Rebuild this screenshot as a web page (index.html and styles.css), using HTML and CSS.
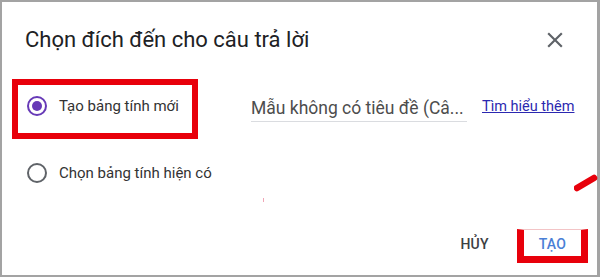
FILE: index.html
```html
<!DOCTYPE html>
<html lang="vi">
<head>
<meta charset="utf-8">
<link rel="stylesheet" href="styles.css">
</head>
<body>
<div class="frame">
  <div class="header">
    <div class="title">Chọn đích đến cho câu trả lời</div>
    <svg class="close" viewBox="0 0 24 24" width="26" height="26"><path d="M19 6.41L17.59 5 12 10.59 6.41 5 5 6.41 10.59 12 5 17.59 6.41 19 12 13.41 17.59 19 19 17.59 13.41 12z" fill="#5f6368"/></svg>
  </div>
  <div class="options">
    <div class="row">
      <span class="radio checked"><span class="dot"></span></span>
      <span class="label first">Tạo bảng tính mới</span>
      <span class="input">Mẫu không có tiêu đề (Câ...</span>
      <a class="link">Tìm hiểu thêm</a>
    </div>
    <div class="row second">
      <span class="radio"></span>
      <span class="label">Chọn bảng tính hiện có</span>
    </div>
  </div>
  <div class="footer">
    <span class="btn cancel">HỦY</span>
    <span class="btn create">TẠO</span>
  </div>
  <div class="mark box1"></div>
  <div class="mark box2"></div>
  <svg class="mark stroke" width="30" height="20" viewBox="0 0 30 20"><line x1="3" y1="16" x2="20" y2="6" stroke="#e8000b" stroke-width="6.5" stroke-linecap="round"/></svg>
  <div class="mark speck"></div>
</div>
</body>
</html>
```
FILE: styles.css
```css
* { box-sizing: border-box; }
html, body { margin: 0; padding: 0; background: #fff; }
body { font-family: Roboto, "Noto Sans", Arial, sans-serif; }
.frame {
  position: relative;
  width: 600px;
  height: 277px;
  border: 2px solid #a3a3a3;
  border-right-width: 3px;
  padding: 26px 0 0 23px;
  display: flex;
  flex-direction: column;
}
.header {
  display: flex;
  align-items: center;
  justify-content: space-between;
  padding-right: 29px;
  height: 24px;
}
.title {
  font-size: 22px;
  line-height: 24px;
  color: #202124;
}
.close { display: block; }
.options {
  margin-top: 44px;
  display: flex;
  flex-direction: column;
  gap: 47px;
}
.row {
  display: flex;
  align-items: center;
  height: 20px;
  padding-left: 2px;
}
.radio {
  width: 20px;
  height: 20px;
  border-radius: 50%;
  border: 2px solid #5f6368;
  display: flex;
  align-items: center;
  justify-content: center;
  flex: none;
}
.radio.checked { border-color: #673ab7; }
.dot {
  width: 10px;
  height: 10px;
  border-radius: 50%;
  background: #673ab7;
}
.label {
  margin-left: 12px;
  font-size: 15px;
  color: #333;
  line-height: 20px;
}
.label.first { width: 192px; }
.input {
  min-width: 216px;
  font-size: 17.5px;
  color: #4d4d4d;
  line-height: 22px;
  border-bottom: 1px solid #dadce0;
  padding-bottom: 2px;
  margin-top: 6px;
  white-space: nowrap;
}
.link {
  margin-left: 15px;
  font-size: 14.5px;
  color: #2b28b0;
  text-decoration: underline;
}
.footer {
  margin-top: 43px;
  display: flex;
  justify-content: flex-end;
  gap: 18px;
  padding-right: 15px;
}
.btn {
  height: 36px;
  padding: 0 16px;
  display: flex;
  align-items: center;
  font-size: 14px;
  font-weight: 500;
  letter-spacing: 0.2px;
}
.cancel { color: #3c4043; }
.create { color: #4a7fd6; }
.mark { position: absolute; }
.box1 {
  left: 10px;
  top: 77px;
  width: 186px;
  height: 60px;
  border: 6px solid #e8000b;
}
.box2 {
  left: 515px;
  top: 227px;
  width: 71px;
  height: 34px;
  border: 7px solid #e8000b;
  border-top: 1px solid #f3c4c6;
}
.stroke { left: 572px; top: 170px; }
.speck {
  left: 261px;
  top: 196px;
  width: 1px;
  height: 4px;
  background: #f0a6b6;
}
```
